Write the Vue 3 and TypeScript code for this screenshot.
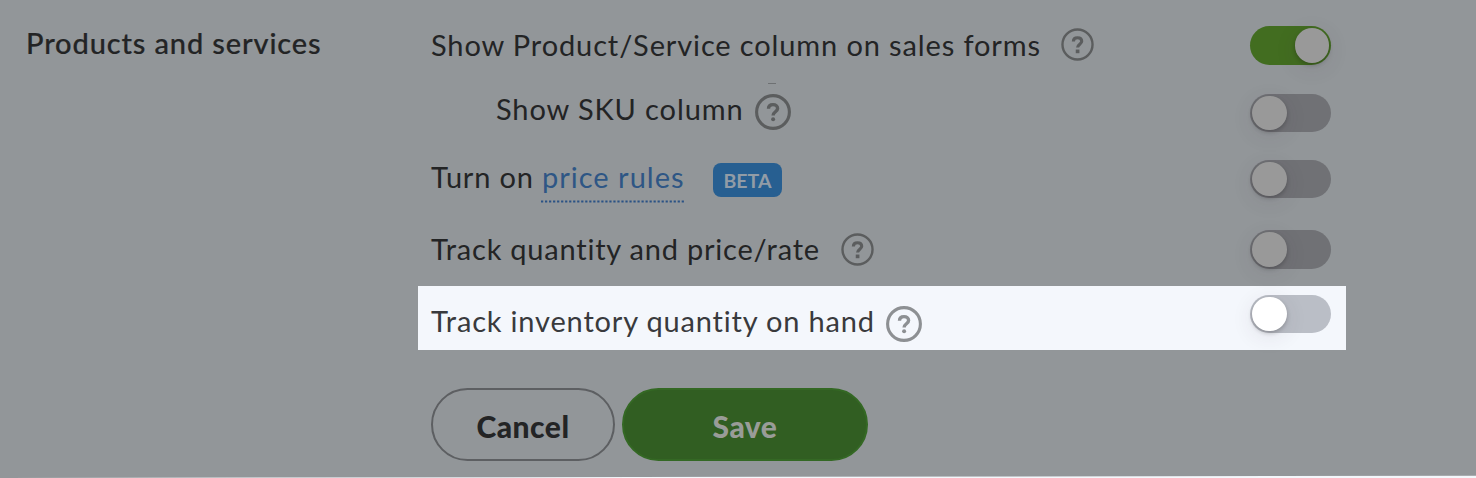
<script setup lang="ts">
interface Setting {
  id: string
  text: string
  link?: string
  badge?: string
  help?: 'small' | 'large'
  on: boolean
}

const settings: Setting[] = [
  { id: 'product', text: 'Show Product/Service column on sales forms', help: 'small', on: true },
  { id: 'sku', text: 'Show SKU column', help: 'large', on: false },
  { id: 'rules', text: 'Turn on', link: 'price rules', badge: 'BETA', on: false },
  { id: 'rate', text: 'Track quantity and price/rate', help: 'small', on: false },
  { id: 'inventory', text: 'Track inventory quantity on hand', help: 'large', on: false },
]
</script>

<template>
  <main class="page">
    <h1 class="title">Products and services</h1>
    <section class="settings">
      <div v-for="s in settings" :key="s.id" class="row" :class="s.id">
        <div class="label">
          <span class="text">{{ s.text }}</span>
          <a v-if="s.link" class="link">
            <span>{{ s.link }}</span>
            <svg class="dots" width="143" height="3" viewBox="0 0 143 3">
              <line x1="0" y1="1.5" x2="143" y2="1.5" stroke="#2a5285" stroke-width="2.2" stroke-dasharray="2.2 1.82" />
            </svg>
          </a>
          <span v-if="s.badge" class="badge">{{ s.badge }}</span>
        </div>
        <svg v-if="s.help" class="help" :class="s.help" viewBox="0 0 36 36" fill="none" stroke="currentColor">
          <circle cx="18" cy="18" r="16.4" :stroke-width="s.help === 'large' ? 3.1 : 2.6" />
          <path d="M13.5 14.8C13.5 12 15.3 10.6 18 10.6C20.8 10.6 22.6 12.2 22.6 14.5C22.6 17.7 18.1 17.8 18.1 21.4" stroke-width="3.4" />
          <circle v-if="s.help === 'large'" cx="18.1" cy="25.2" r="2" fill="currentColor" stroke="none" />
          <rect v-else x="16.1" y="23.5" width="4" height="4" fill="currentColor" stroke="none" />
        </svg>
        <span class="switch" :class="{ on: s.on }" role="switch" :aria-checked="s.on"><i class="knob"></i></span>
      </div>
      <div class="actions">
        <button class="cancel"><span>Cancel</span></button>
        <button class="save"><span>Save</span></button>
      </div>
    </section>
  </main>
</template>

<style>
body {
  margin: 0;
  background: #f3f7fb;
}
</style>

<style scoped>
.page {
  display: flex;
  box-sizing: border-box;
  width: 1476px;
  height: 478px;
  overflow: hidden;
  background: #929699;
  clip-path: polygon(0 0, 100% 0, 100% 475.7px, 0 477.9px);
  color: #232425;
  font-family: Lato, "Open Sans", sans-serif;
}
.title {
  flex: none;
  box-sizing: border-box;
  width: 418px;
  margin: 0;
  padding: 23px 0 0 26px;
  font-size: 29px;
  line-height: 40px;
  font-weight: 500;
  letter-spacing: 0.87px;
  white-space: nowrap;
  -webkit-text-stroke: 0.2px currentColor;
}
.settings {
  width: 928px;
}
.row {
  display: flex;
  align-items: flex-start;
  box-sizing: border-box;
  padding: 0 15px 0 13px;
}
.label {
  display: flex;
  flex: none;
  font-size: 29px;
  line-height: 40px;
  white-space: nowrap;
}
.help {
  flex: none;
  color: #5b5d5e;
}
.small { width: 33px; height: 33px; }
.large { width: 36px; height: 36px; }
.switch {
  flex: none;
  box-sizing: border-box;
  width: 81px;
  height: 38.5px;
  margin-left: auto;
  padding: 2px;
  border-radius: 20px;
  background: #707175;
}
.knob {
  display: block;
  width: 34.5px;
  height: 34.5px;
  border-radius: 50%;
  background: #999;
  box-shadow: 0 2px 4px rgba(0, 0, 0, 0.22), 0 5px 22px rgba(60, 45, 60, 0.11);
}
.on { background: #426d20; }
.on .knob { margin-left: 42.5px; }

.product { height: 80px; }
.product .label { width: 630px; padding-top: 25px; letter-spacing: 0.87px; }
.product .help { margin-top: 28px; }
.product .switch { margin-top: 26px; }

.sku { height: 66px; padding-left: 78px; }
.sku .label { width: 259px; padding-top: 9px; letter-spacing: 0.88px; }
.sku .help { position: relative; overflow: visible; margin-top: 14px; }
.sku { background: linear-gradient(#6e7173, #6e7173) 350px 3px / 8px 1px no-repeat; }
.sku .switch { margin-top: 13.5px; }

.rules { height: 69px; }
.rules .label { padding-top: 11px; }
.rules .text { width: 110px; letter-spacing: 0.8px; }
.rules .switch { margin-top: 13.5px; }
.link {
  display: flex;
  flex-direction: column;
  width: 143px;
  color: #2e5685;
  letter-spacing: 1px;
}
.link span { padding-left: 1px; }
.dots { margin-top: 3px; }
.badge {
  width: 69px;
  height: 34px;
  margin: 6px 0 0 29px;
  border-radius: 8px;
  background: #275f91;
  color: #929ca6;
  font-size: 19.5px;
  line-height: 36px;
  font-weight: 700;
  text-align: center;
}

.rate { height: 71px; }
.rate .label { width: 410px; padding-top: 14px; letter-spacing: 0.78px; }
.rate .help { margin-top: 18px; }
.rate .switch { margin-top: 15px; }

.inventory { height: 64px; background: #f4f7fc; color: #393a3d; }
.inventory .label { width: 455px; padding-top: 15px; letter-spacing: 0.82px; }
.inventory .help { margin-top: 20px; color: #8d9093; }
.inventory .switch { margin-top: 8.5px; background: #babec6; }
.inventory .knob { background: #fff; }

.actions {
  display: flex;
  gap: 7px;
  padding: 38px 0 0 13px;
}
button {
  box-sizing: border-box;
  height: 73px;
  padding: 3px 0 0;
  border-radius: 37px;
  font: 900 30px/40px Lato, sans-serif;
  letter-spacing: 0.5px;
}
.cancel {
  width: 184px;
  border: 2px solid #5d5f62;
  background: transparent;
  color: #232425;
}
.save {
  width: 246px;
  border: 2px solid #346824;
  background: #315e22;
  color: #999c98;
}
</style>
